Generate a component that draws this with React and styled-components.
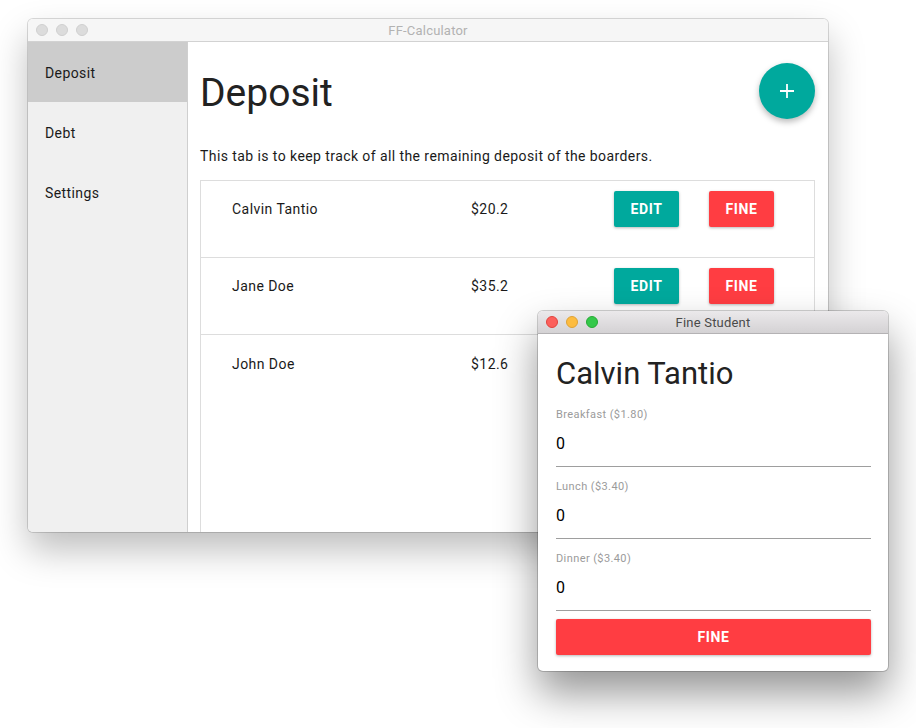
import React from 'react';
import styled, { createGlobalStyle } from 'styled-components';

const GlobalStyle = createGlobalStyle`
  html, body {
    margin: 0;
    padding: 0;
    background: #ffffff;
  }
  body {
    font-family: Roboto, "Liberation Sans", sans-serif;
  }
`;

const boarders = [
  { name: 'Calvin Tantio', deposit: '$20.2' },
  { name: 'Jane Doe', deposit: '$35.2' },
  { name: 'John Doe', deposit: '$12.6' },
];

const meals = [
  { label: 'Breakfast ($1.80)', value: '0' },
  { label: 'Lunch ($3.40)', value: '0' },
  { label: 'Dinner ($3.40)', value: '0' },
];

const tabs = ['Deposit', 'Debt', 'Settings'];

const App = () => (
  <>
    <GlobalStyle />
    <Desktop>
      <Window $left={28} $top={19} $width={800} $height={513}>
        <TitleBar>
          <Lights>
            <Light $color="#dcdcdc" $edge="#cfcfcf" />
            <Light $color="#dcdcdc" $edge="#cfcfcf" />
            <Light $color="#dcdcdc" $edge="#cfcfcf" />
          </Lights>
          <WindowTitle>FF-Calculator</WindowTitle>
        </TitleBar>
        <MainBody>
          <Sidebar>
            {tabs.map((tab, i) => (
              <SideItem key={tab} $active={i === 0}>{tab}</SideItem>
            ))}
          </Sidebar>
          <Content>
            <Header>
              <PageTitle>Deposit</PageTitle>
              <Fab>
                <svg width="18" height="18" viewBox="0 0 18 18">
                  <path d="M9 2v14M2 9h14" stroke="#fff" strokeWidth="1.8" />
                </svg>
              </Fab>
            </Header>
            <Description>
              This tab is to keep track of all the remaining deposit of the boarders.
            </Description>
            <List>
              {boarders.map((b) => (
                <Row key={b.name}>
                  <Name>{b.name}</Name>
                  <Amount>{b.deposit}</Amount>
                  <Button $color="#00a99d">Edit</Button>
                  <Button $color="#ff3d42" $gap>Fine</Button>
                </Row>
              ))}
            </List>
          </Content>
        </MainBody>
      </Window>

      <Window $left={538} $top={311} $width={350} $height={360} $front>
        <TitleBar $front>
          <Lights>
            <Light $color="#fc605c" $edge="#e0443e" />
            <Light $color="#fdbc40" $edge="#dea236" />
            <Light $color="#34c84a" $edge="#27aa35" />
          </Lights>
          <WindowTitle $front>Fine Student</WindowTitle>
        </TitleBar>
        <DialogBody>
          <StudentName>Calvin Tantio</StudentName>
          {meals.map((m, i) => (
            <Field key={m.label} $last={i === meals.length - 1}>
              <FieldLabel>{m.label}</FieldLabel>
              <FieldValue>{m.value}</FieldValue>
            </Field>
          ))}
          <WideButton>Fine</WideButton>
        </DialogBody>
      </Window>
    </Desktop>
  </>
);

export default App;

const Desktop = styled.div`
  position: relative;
  width: 916px;
  height: 728px;
  overflow: hidden;
  background: #ffffff;
`;

const Window = styled.div`
  position: absolute;
  left: ${(p) => p.$left}px;
  top: ${(p) => p.$top}px;
  width: ${(p) => p.$width}px;
  height: ${(p) => p.$height}px;
  display: flex;
  flex-direction: column;
  box-sizing: border-box;
  border-radius: 5px;
  overflow: hidden;
  background: #ffffff;
  box-shadow: ${(p) =>
    p.$front
      ? '0 22px 42px rgba(0, 0, 0, 0.42), 0 0 0 1px rgba(0, 0, 0, 0.18)'
      : '0 18px 36px rgba(0, 0, 0, 0.26), 0 0 0 1px rgba(0, 0, 0, 0.14)'};
`;

const TitleBar = styled.div`
  position: relative;
  flex: 0 0 auto;
  height: 22px;
  display: flex;
  align-items: center;
  justify-content: center;
  background: ${(p) =>
    p.$front ? 'linear-gradient(#ebe9eb, #d4d2d4)' : '#f6f6f6'};
  border-bottom: 1px solid ${(p) => (p.$front ? '#b4b2b4' : '#d2d2d2')};
`;

const Lights = styled.div`
  position: absolute;
  left: 8px;
  top: 5px;
  display: flex;
  gap: 8px;
`;

const Light = styled.span`
  width: 12px;
  height: 12px;
  box-sizing: border-box;
  border-radius: 50%;
  background: ${(p) => p.$color};
  border: 0.5px solid ${(p) => p.$edge};
`;

const WindowTitle = styled.div`
  font-family: Roboto, "Liberation Sans", sans-serif;
  font-size: 13px;
  letter-spacing: 0.2px;
  padding-top: 1px;
  color: ${(p) => (p.$front ? '#4a4a4a' : '#b2b2b2')};
`;

const MainBody = styled.div`
  flex: 1;
  display: flex;
  min-height: 0;
`;

const Sidebar = styled.nav`
  width: 159px;
  flex: 0 0 auto;
  background: #f0f0f0;
  border-right: 1px solid #cfcfcf;
`;

const SideItem = styled.div`
  height: 60px;
  box-sizing: border-box;
  display: flex;
  align-items: center;
  padding: 2px 0 0 17px;
  font-size: 14px;
  letter-spacing: 0.4px;
  color: #1a1a1a;
  background: ${(p) => (p.$active ? '#cccccc' : 'transparent')};
`;

const Content = styled.main`
  flex: 1;
  padding: 21px 13px 0 12px;
  overflow: hidden;
`;

const Header = styled.div`
  display: flex;
  align-items: center;
  justify-content: space-between;
`;

const PageTitle = styled.h1`
  margin: 0;
  padding-top: 3px;
  font-size: 39px;
  font-weight: 400;
  color: #222;
  line-height: 48px;
`;

const Fab = styled.button`
  width: 56px;
  height: 56px;
  border: none;
  border-radius: 50%;
  background: #00a99d;
  display: flex;
  align-items: center;
  justify-content: center;
  padding: 0;
  box-shadow: 0 3px 6px rgba(0, 0, 0, 0.28);
`;

const Description = styled.p`
  margin: 27px 0 14px;
  font-size: 14px;
  line-height: 20px;
  letter-spacing: 0.42px;
  color: #1a1a1a;
`;

const List = styled.div`
  border: 1px solid #dddddd;
  height: 420px;
`;

const Row = styled.div`
  display: flex;
  align-items: center;
  height: 77px;
  box-sizing: border-box;
  padding: 0 0 20px 31px;
  border-bottom: 1px solid #dddddd;
  font-size: 14px;
  letter-spacing: 0.45px;
  color: #1a1a1a;

  &:last-child {
    border-bottom: none;
  }
`;

const Name = styled.div`
  width: 239px;
`;

const Amount = styled.div`
  width: 143px;
`;

const Button = styled.button`
  width: 65px;
  height: 36px;
  margin-left: ${(p) => (p.$gap ? '30px' : '0')};
  border: none;
  border-radius: 2px;
  background: ${(p) => p.$color};
  color: #ffffff;
  font-family: Roboto, "Liberation Sans", sans-serif;
  font-size: 14px;
  font-weight: 700;
  letter-spacing: 0.6px;
  text-transform: uppercase;
  box-shadow: 0 1px 3px rgba(0, 0, 0, 0.28);
  padding: 0;
`;

const DialogBody = styled.div`
  flex: 1;
  padding: 21px 17px 16px 18px;
  display: flex;
  flex-direction: column;
`;

const StudentName = styled.h2`
  margin: 0 0 15px;
  font-size: 31px;
  font-weight: 400;
  line-height: 38px;
  color: #222;
`;

const Field = styled.div`
  display: flex;
  flex-direction: column;
  border-bottom: 1px solid #9e9e9e;
  margin-bottom: ${(p) => (p.$last ? '8px' : '13px')};
`;

const FieldLabel = styled.label`
  font-size: 11px;
  line-height: 14px;
  letter-spacing: 0.4px;
  color: #9b9b9b;
`;

const FieldValue = styled.div`
  padding: 12px 0 12px;
  font-size: 16px;
  line-height: 20px;
  color: #000;
`;

const WideButton = styled.button`
  height: 36px;
  flex: 0 0 auto;
  border: none;
  border-radius: 2px;
  background: #ff3d42;
  color: #ffffff;
  font-family: Roboto, "Liberation Sans", sans-serif;
  font-size: 14px;
  font-weight: 700;
  letter-spacing: 0.6px;
  text-transform: uppercase;
  box-shadow: 0 1px 3px rgba(0, 0, 0, 0.28);
`;
